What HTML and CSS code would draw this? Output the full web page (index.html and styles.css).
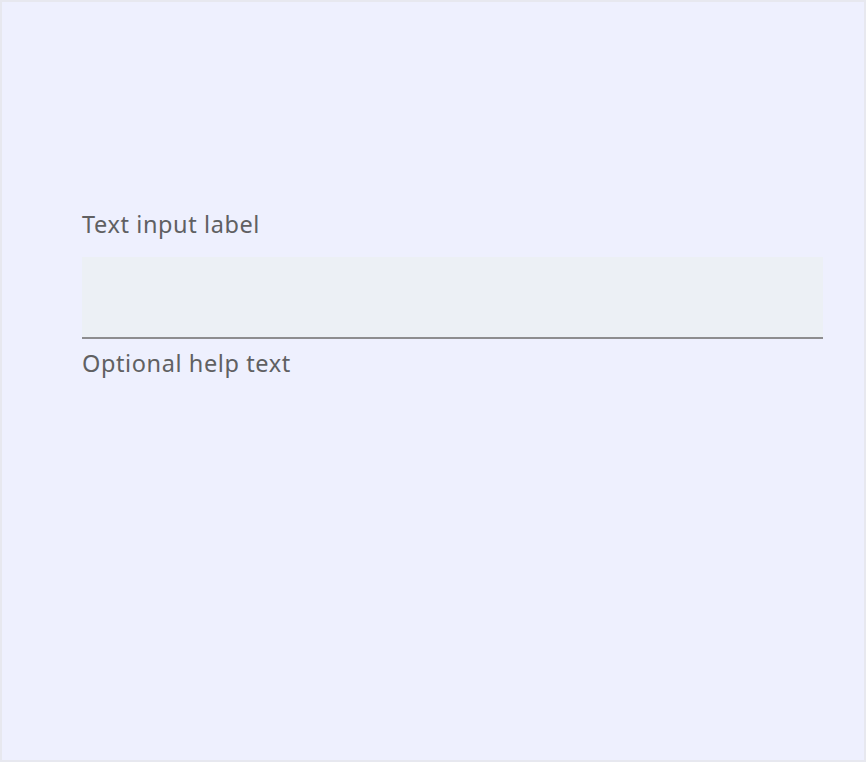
FILE: index.html
```html
<!DOCTYPE html>
<html lang="en">
<head>
<meta charset="utf-8">
<title>Text input</title>
<link rel="stylesheet" href="styles.css">
</head>
<body>
<div class="frame">
  <div class="form-item">
    <label class="label" for="ti">Text input label</label>
    <input class="input" id="ti" type="text">
    <div class="helper">Optional help text</div>
  </div>
</div>
</body>
</html>
```
FILE: styles.css
```css
html, body {
  margin: 0;
  padding: 0;
  background: #e9eaf0;
}
.frame {
  box-sizing: border-box;
  width: 866px;
  height: 762px;
  border: 2px solid #e7e8ef;
  background: #eef0fe;
  padding: 206px 41px 0 80px;
  font-family: "Noto Sans", "Liberation Sans", sans-serif;
}
.form-item {
  display: flex;
  flex-direction: column;
}
.label {
  font-size: 23.5px;
  line-height: 32px;
  letter-spacing: 0.6px;
  color: #606062;
  margin-bottom: 17px;
}
.input {
  box-sizing: border-box;
  height: 82px;
  width: 100%;
  margin: 0;
  border: none;
  border-bottom: 2px solid #8d8d8f;
  background: #ecf0f5;
  outline: none;
}
.helper {
  margin-top: 8px;
  font-size: 23.5px;
  line-height: 32px;
  letter-spacing: 0.6px;
  color: #606062;
}
```
